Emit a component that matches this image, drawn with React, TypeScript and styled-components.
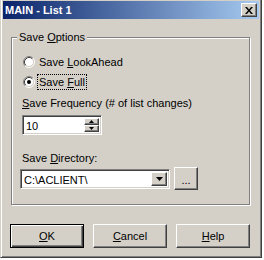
import React from "react";
import styled, { createGlobalStyle, css } from "styled-components";

const Global = createGlobalStyle`
  html, body { margin: 0; padding: 0; background: #ffffff; }
  body { font-family: "Liberation Sans", Arial, sans-serif; font-size: 11px; color: #000; overflow: hidden; }
  * { box-sizing: border-box; }
`;

const raised = css`
  border: 1px solid;
  border-color: #ffffff #404040 #404040 #ffffff;
  box-shadow: inset -1px -1px #808080, inset 1px 1px #d4d0c8;
  background: #d4d0c8;
`;

const sunken = css`
  border: 1px solid;
  border-color: #808080 #ffffff #ffffff #808080;
  box-shadow: inset 1px 1px #404040, inset -1px -1px #d4d0c8;
  background: #ffffff;
`;

const Window = styled.div`
  width: 262px;
  height: 260px;
  margin-top: -2px;
  display: flex;
  flex-direction: column;
  background: #d4d0c8;
  border: 1px solid;
  border-color: #d4d0c8 #404040 #404040 #d4d0c8;
  box-shadow: inset 1px 1px #ffffff, inset -1px -1px #808080;
  padding: 2px;
`;

const TitleBar = styled.div`
  height: 18px;
  display: flex;
  align-items: center;
  justify-content: space-between;
  padding: 0 2px 0 2px;
  background: linear-gradient(to right, #0a246a, #a6caf0);
`;

const Title = styled.span`
  color: #ffffff;
  font-weight: bold;
  font-size: 11px;
  line-height: 13px;
`;

const CloseButton = styled.div`
  ${raised};
  width: 16px;
  height: 14px;
  display: flex;
  align-items: center;
  justify-content: center;
`;

const Body = styled.div`
  flex: 1;
  display: flex;
  flex-direction: column;
  padding: 18px 9px 0 8px;
`;

const Group = styled.div`
  position: relative;
  height: 168px;
  border: 1px solid #808080;
  box-shadow: inset 1px 1px #ffffff, 1px 1px #ffffff;
  padding: 16px 0 0 8px;
  display: flex;
  flex-direction: column;
`;

const Caption = styled.span`
  position: absolute;
  top: -7px;
  left: 5px;
  padding: 0 2px;
  line-height: 13px;
  background: #d4d0c8;
`;

const RadioRow = styled.div<{ $mt?: number }>`
  height: 16px;
  margin-top: ${(p) => p.$mt ?? 0}px;
  display: flex;
  align-items: center;
  gap: 4px;
  padding-left: 3px;
`;

const RadioLabel = styled.span<{ $focus?: boolean }>`
  line-height: 14px;
  padding: 0 1px;
  margin-left: -1px;
  outline: ${(p) => (p.$focus ? "1px dotted #000" : "none")};
  outline-offset: 0;
`;

const FieldLabel = styled.div<{ $mt: number }>`
  margin-top: ${(p) => p.$mt}px;
  height: 14px;
  line-height: 14px;
  padding-left: 2px;
`;

const SpinBox = styled.div`
  ${sunken};
  margin-top: 5px;
  margin-left: 2px;
  width: 80px;
  height: 20px;
  display: flex;
  padding: 2px;
`;

const FieldText = styled.span`
  flex: 1;
  line-height: 16px;
  padding-left: 1px;
`;

const SpinButtons = styled.div`
  width: 15px;
  display: flex;
  flex-direction: column;
`;

const SpinButton = styled.div`
  ${raised};
  flex: 1;
  display: flex;
  align-items: center;
  justify-content: center;
`;

const ComboRow = styled.div`
  margin-top: 2px;
  height: 23px;
  display: flex;
  align-items: center;
  gap: 4px;
`;

const Combo = styled.div`
  ${sunken};
  width: 150px;
  height: 20px;
  display: flex;
  padding: 2px;
`;

const DropButton = styled.div`
  ${raised};
  width: 16px;
  display: flex;
  align-items: center;
  justify-content: center;
`;

const Button = styled.div<{ $default?: boolean; $w: number; $h: number }>`
  width: ${(p) => p.$w}px;
  height: ${(p) => p.$h}px;
  display: flex;
  align-items: center;
  justify-content: center;
  background: #d4d0c8;
  ${(p) =>
    p.$default
      ? css`
          border: 1px solid #000;
          box-shadow: inset 1px 1px #ffffff, inset -1px -1px #404040, inset -2px -2px #808080;
        `
      : raised}
`;

const BrowseText = styled.span`
  padding-top: 3px;
  line-height: 13px;
`;

const ButtonRow = styled.div`
  margin-top: 19px;
  margin-left: -1px;
  display: flex;
  gap: 9px;
`;

const U = styled.span`
  text-decoration: underline;
  text-underline-offset: 1px;
`;

const Radio = ({ checked }: { checked?: boolean }) => (
  <svg width="12" height="12" viewBox="0 0 12 12">
    <circle cx="6" cy="6" r="4.5" fill="#fff" />
    <path d="M2.11 9.89 A5.5 5.5 0 0 1 9.89 2.11" stroke="#808080" fill="none" />
    <path d="M9.89 2.11 A5.5 5.5 0 0 1 2.11 9.89" stroke="#ffffff" fill="none" />
    <path d="M2.82 9.18 A4.5 4.5 0 0 1 9.18 2.82" stroke="#404040" fill="none" />
    <path d="M9.18 2.82 A4.5 4.5 0 0 1 2.82 9.18" stroke="#d4d0c8" fill="none" />
    {checked && <circle cx="6" cy="6" r="2" fill="#000" />}
  </svg>
);

const CloseIcon = () => (
  <svg width="8" height="7" viewBox="0 0 8 7">
    <path d="M0 0h2l2 2.5L6 0h2L5 3.5 8 7H6L4 4.5 2 7H0l3-3.5z" fill="#000" />
  </svg>
);

const Arrow = ({ up, w, h }: { up?: boolean; w: number; h: number }) => (
  <svg width={w} height={h} viewBox={`0 0 ${w} ${h}`}>
    {up ? (
      <path d={`M0 ${h}H${w}L${w / 2} 0z`} fill="#000" />
    ) : (
      <path d={`M0 0H${w}L${w / 2} ${h}z`} fill="#000" />
    )}
  </svg>
);

export default function App() {
  return (
    <>
      <Global />
      <Window>
        <TitleBar>
          <Title>MAIN - List 1</Title>
          <CloseButton>
            <CloseIcon />
          </CloseButton>
        </TitleBar>
        <Body>
          <Group>
            <Caption>
              Save <U>O</U>ptions
            </Caption>
            <RadioRow>
              <Radio />
              <RadioLabel>
                Save <U>L</U>ookAhead
              </RadioLabel>
            </RadioRow>
            <RadioRow $mt={4}>
              <Radio checked />
              <RadioLabel $focus>
                Save <U>F</U>ull
              </RadioLabel>
            </RadioRow>
            <FieldLabel $mt={6}>
              <U>S</U>ave Frequency (# of list changes)
            </FieldLabel>
            <SpinBox>
              <FieldText>10</FieldText>
              <SpinButtons>
                <SpinButton>
                  <Arrow up w={5} h={3} />
                </SpinButton>
                <SpinButton>
                  <Arrow w={5} h={3} />
                </SpinButton>
              </SpinButtons>
            </SpinBox>
            <FieldLabel $mt={16}>
              Save <U>D</U>irectory:
            </FieldLabel>
            <ComboRow>
              <Combo>
                <FieldText>C:\ACLIENT\</FieldText>
                <DropButton>
                  <Arrow w={7} h={4} />
                </DropButton>
              </Combo>
              <Button $w={24} $h={23}>
                <BrowseText>...</BrowseText>
              </Button>
            </ComboRow>
          </Group>
          <ButtonRow>
            <Button $default $w={75} $h={24}>
              <U>O</U>K
            </Button>
            <Button $w={75} $h={24}>
              <U>C</U>ancel
            </Button>
            <Button $w={75} $h={24}>
              <U>H</U>elp
            </Button>
          </ButtonRow>
        </Body>
      </Window>
    </>
  );
}
